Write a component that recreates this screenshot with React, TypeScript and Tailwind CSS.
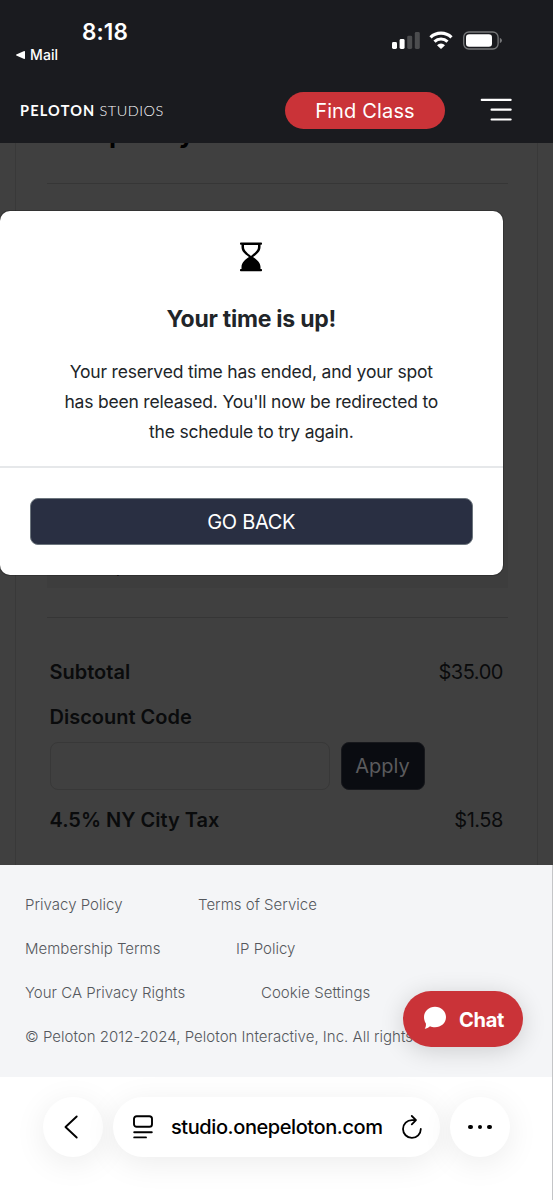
import type { ReactNode } from "react";

interface FooterLink {
  label: string;
  className: string;
}

const footerRows: FooterLink[][] = [
  [
    { label: "Privacy Policy", className: "w-[97px]" },
    { label: "Terms of Service", className: "w-[119px]" },
  ],
  [
    { label: "Membership Terms", className: "w-[135px]" },
    { label: "IP Policy", className: "w-[59px]" },
  ],
  [
    { label: "Your CA Privacy Rights", className: "w-[160px]" },
    { label: "Cookie Settings", className: "w-[110px]" },
  ],
];

function StatusBar() {
  return (
    <div className="flex h-[78px] justify-between text-white">
      <div className="pt-[18px]">
        <div className="pl-[82px] text-[22.5px] leading-7 font-semibold tracking-[0.1px]">8:18</div>
        <div className="-mt-px flex items-center gap-[5px] pl-4 text-[14px] leading-5 font-medium tracking-[0.1px]">
          <svg width="9" height="8" viewBox="0 0 9 8" fill="currentColor">
            <path d="M0.3 3.5 8.2 0.1Q9 0 9 0.7V7.3Q9 8 8.2 7.9L0.3 4.5Q-0.2 4 0.3 3.5Z" />
          </svg>
          Mail
        </div>
      </div>
      <div className="flex items-start gap-[9px] pt-[31px] pr-[51px]">
        <svg width="29" height="18" viewBox="0 0 29 18">
          <rect x="1" y="11" width="5" height="7" rx="1.4" fill="#fff" />
          <rect x="8.6" y="8" width="5" height="10" rx="1.4" fill="#fff" />
          <rect x="16.2" y="4.7" width="5" height="13.3" rx="1.4" fill="#4b4c4e" />
          <rect x="23.8" y="1" width="5" height="17" rx="1.4" fill="#4b4c4e" />
        </svg>
        <svg width="24" height="18" viewBox="0 0 24 18" fill="none" stroke="#fff">
          <path d="M1.5 6.4A15.2 15.2 0 0 1 22.5 6.4" strokeWidth="3.2" />
          <path d="M5.5 10.6A9.4 9.4 0 0 1 18.5 10.6" strokeWidth="3.1" />
          <path d="M8 14.2A5.7 5.7 0 0 1 16 14.2L12.6 17.6Q12 18 11.4 17.6Z" fill="#fff" stroke="none" />
        </svg>
        <svg width="39" height="19" viewBox="0 0 39 19" className="ml-[1px]">
          <rect x="0.7" y="1" width="34.4" height="17" rx="5.2" fill="none" stroke="#77787a" strokeWidth="1.3" />
          <rect x="3" y="3.2" width="26" height="12.6" rx="3.2" fill="#fff" />
          <path d="M36.8 6.8Q39 7.7 39 9.5T36.8 12.2Z" fill="#77787a" />
        </svg>
      </div>
    </div>
  );
}

function Header() {
  return (
    <div className="flex h-[65px] items-start text-white">
      <div className="mt-[23px] ml-5 w-[146px] whitespace-nowrap font-[Lato] text-[14.5px] leading-5">
        <span className="font-bold tracking-[1.2px]">PELOTON</span>
        <span className="ml-[4px] font-light tracking-[0.5px]">STUDIOS</span>
      </div>
      <button className="mt-[14px] ml-[119px] h-[37px] w-[160px] rounded-full bg-[#ca3338] pt-px text-[20px] leading-[37px] tracking-[0.15px]">
        Find Class
      </button>
      <svg width="32" height="24" viewBox="0 0 32 24" fill="#fff" className="mt-5 ml-[35px]">
        <rect x="0.7" y="0.8" width="31" height="2.1" rx="1" />
        <rect x="10.5" y="10.6" width="21.2" height="2.1" rx="1" />
        <rect x="10.5" y="20.5" width="21.2" height="2.1" rx="1" />
      </svg>
    </div>
  );
}

function TimeoutModal() {
  return (
    <div className="absolute top-[68px] left-0 h-[364px] w-[502.5px] rounded-[10px] bg-white text-center text-[#212529] shadow-[0_0_0_1px_rgba(0,0,0,0.2)]">
      <div className="flex h-[255px] flex-col items-center">
        <svg width="24" height="30" viewBox="0 0 24 30" className="mt-[31px]" fill="#000">
          <path d="M2.5 2V5C2.5 10 7 12.8 10 15C7 17.2 2.5 20 2.5 25V28H21.5V25C21.5 20 17 17.2 14 15C17 12.8 21.5 10 21.5 5V2Z" />
          <path d="M5 3V5C5 9 9.4 11.6 12 14C14.6 11.6 19 9 19 5V3Z" fill="#fff" />
          <rect x="1" y="0.5" width="22" height="2.2" rx="0.8" />
          <rect x="1" y="27" width="22" height="2.2" rx="0.8" />
        </svg>
        <h2 className="mt-[31px] text-[23px] leading-[32px] font-bold tracking-[-0.25px]">Your time is up!</h2>
        <p className="mt-[22px] text-[17.5px] leading-[30px] tracking-[-0.2px]">
          Your reserved time has ended, and your spot
          <br />
          has been released. You'll now be redirected to
          <br />
          the schedule to try again.
        </p>
      </div>
      <div className="border-t-2 border-[#e6e8ea] px-[30px] pt-[30px]">
        <button className="block h-[47px] w-full rounded-[8px] border-[1.5px] border-[#6c757d] bg-[#292f42] text-[20px] tracking-[-0.3px] text-white">
          GO BACK
        </button>
      </div>
    </div>
  );
}

function SummaryRow({ label, children }: { label: string; children?: ReactNode }) {
  return (
    <div className="flex justify-between text-[20px] leading-[30px]">
      <span className="font-semibold">{label}</span>
      {children && <span className="tracking-[-0.45px]">{children}</span>}
    </div>
  );
}

function OrderSummary() {
  return (
    <div className="ml-[15px] h-full w-[523px] border-x-[1.5px] border-[#393939] text-[#0a0b0c]">
      <div className="mr-[29px] ml-[31px] flex h-full flex-col">
        <h1 className="-mt-[27px] pl-[3px] text-[26px] leading-[36px] font-bold text-black">Complete your order</h1>
        <div className="mt-[31px] h-px bg-[#363636]" />
        <div className="mt-[336px] h-[68px] bg-[#3d3d3d] pt-[38px] pl-[3px] text-[15.5px] leading-5 tracking-[-0.5px]">
          Limit (Drop-in)
        </div>
        <div className="mt-[29px] h-px bg-[#363636]" />
        <div className="pt-[39px] pr-[5px] pl-[2.5px]">
          <SummaryRow label="Subtotal">$35.00</SummaryRow>
          <div className="mt-[15px]">
            <SummaryRow label="Discount Code" />
          </div>
          <div className="mt-[10px] flex gap-[11px]">
            <div className="h-[48px] w-[280px] rounded-[8px] border-[1.5px] border-[#383838]" />
            <button className="h-[48px] w-[84px] rounded-[8px] border border-[#17181c] bg-[#0a0c11] text-[20px] text-[#5b5b5d]">
              Apply
            </button>
          </div>
          <div className="mt-[15px]">
            <SummaryRow label="4.5% NY City Tax">$1.58</SummaryRow>
          </div>
        </div>
      </div>
    </div>
  );
}

function Footer() {
  return (
    <footer className="relative h-[212px] bg-[#f4f5f7] pt-[28px] pl-[25px] text-[15px] leading-6 font-light tracking-[0.02px] text-[#55585d]">
      {footerRows.map((row) => (
        <div key={row[0].label} className="mb-5 flex gap-[76px] whitespace-nowrap">
          {row.map((link) => (
            <a key={link.label} className={link.className}>
              {link.label}
            </a>
          ))}
        </div>
      ))}
      <p className="whitespace-nowrap">© Peloton 2012-2024, Peloton Interactive, Inc. All rights</p>
      <button className="absolute top-[126px] left-[403px] flex h-[56px] w-[120px] items-center rounded-full bg-[#ca3338] pt-px pl-[20px] text-[20px] font-bold tracking-[-0.3px] text-white shadow-[0_4px_24px_rgba(0,0,0,0.16)]">
        <svg width="24" height="24" viewBox="0 0 24 24" fill="currentColor" className="mr-[12px] -mt-[3px]">
          <path d="M12 0.7C18 0.7 23 5 23 11S18 21.3 12 21.3C10 21.3 8.4 21 7 20.3C5.4 21.8 3.5 22.6 1.7 22.7C2.8 21.3 3.2 19.5 2.8 17.3C1.6 15.5 1 13.4 1 11C1 5 6 0.7 12 0.7Z" />
        </svg>
        Chat
      </button>
    </footer>
  );
}

function BrowserBar() {
  return (
    <nav className="relative flex h-[123px] items-start gap-[10px] overflow-hidden bg-white pt-5 pl-[43px] text-black">
      <button className="flex h-[60px] w-[60px] items-center justify-center rounded-full bg-white shadow-[0_6px_32px_rgba(0,0,0,0.08)]">
        <svg width="16" height="24" viewBox="0 0 16 24" fill="none" stroke="currentColor" strokeWidth="1.9" strokeLinecap="round" strokeLinejoin="round" className="-ml-1">
          <path d="M13.7 1.5 2.5 12 13.7 22.5" />
        </svg>
      </button>
      <div className="flex h-[60px] w-[327px] items-center rounded-full bg-white pl-5 shadow-[0_6px_32px_rgba(0,0,0,0.08)]">
        <svg width="20" height="24" viewBox="0 0 20 24" fill="none" stroke="currentColor" strokeWidth="1.9" strokeLinecap="round">
          <rect x="1" y="1.2" width="18" height="10.6" rx="2.6" />
          <path d="M1.2 17.2H18.8M1.2 22.4H13" />
        </svg>
        <span className="ml-[18px] w-[212px] text-[20px] font-medium tracking-[-0.42px]">studio.onepeloton.com</span>
        <svg width="20" height="24" viewBox="0 0 20 24" fill="none" stroke="currentColor" strokeWidth="1.8" strokeLinecap="round" strokeLinejoin="round" className="-mt-px ml-[19px]">
          <path d="M18.8 14A8.9 8.9 0 1 1 10 5.1H14M9.8 1 14 5.1 9.8 9.3" />
        </svg>
      </div>
      <button className="flex h-[60px] w-[60px] items-center justify-center gap-[5px] rounded-full bg-white shadow-[0_6px_32px_rgba(0,0,0,0.08)]">
        <span className="size-[4.8px] rounded-full bg-black" />
        <span className="size-[4.8px] rounded-full bg-black" />
        <span className="size-[4.8px] rounded-full bg-black" />
      </button>
    </nav>
  );
}

export default function App() {
  return (
    <div className="relative h-[1200px] w-[553px] overflow-hidden font-[Inter,sans-serif]">
      <header className="relative z-10 h-[143px] bg-[#1a1b1f]">
        <StatusBar />
        <Header />
      </header>
      <main className="relative h-[722px] overflow-hidden bg-[#404040]">
        <OrderSummary />
        <TimeoutModal />
      </main>
      <Footer />
      <BrowserBar />
      <div className="absolute top-[865px] right-0 h-[335px] w-px bg-[#c4c5c7]" />
    </div>
  );
}
